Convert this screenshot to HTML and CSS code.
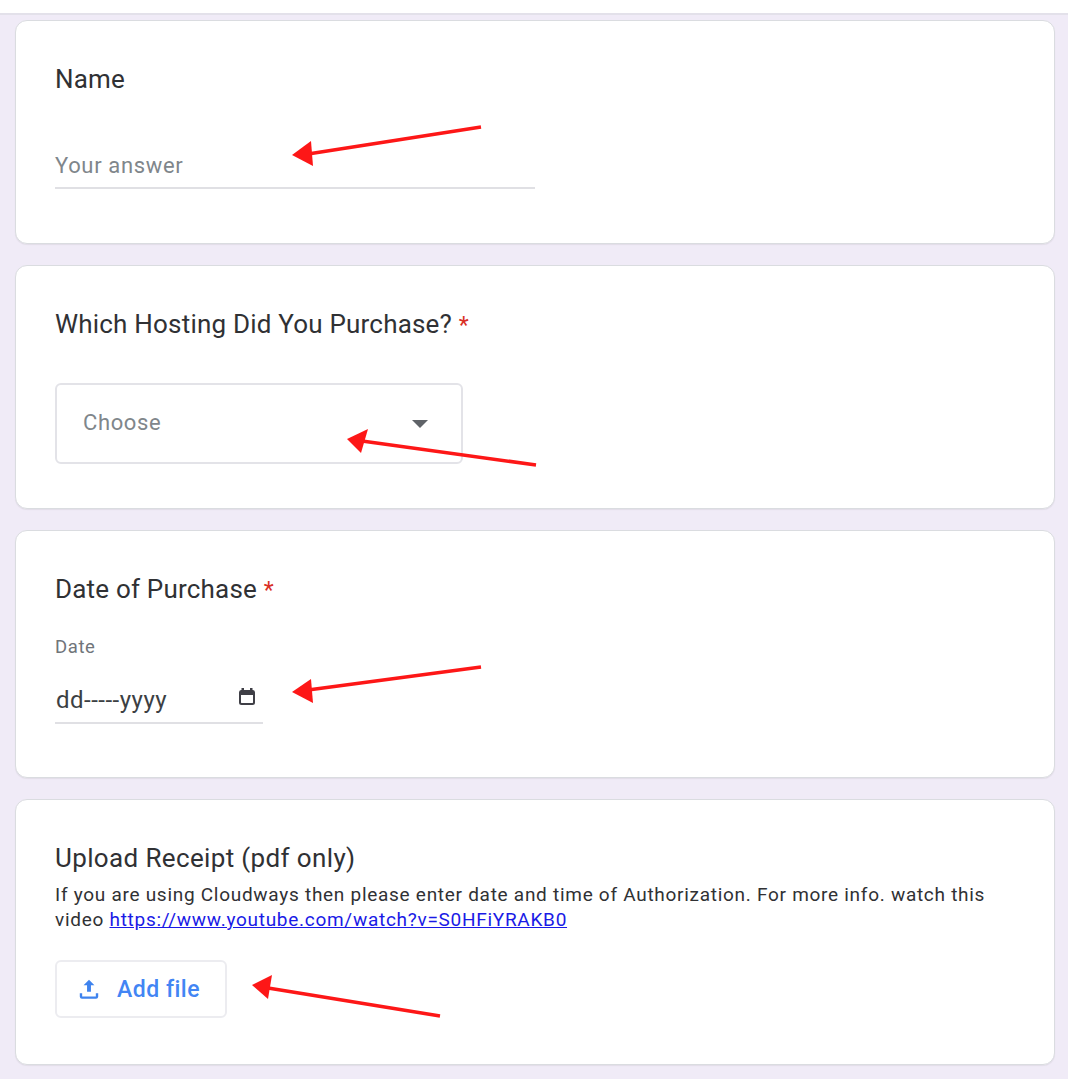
FILE: index.html
```html
<!DOCTYPE html>
<html lang="en">
<head>
<meta charset="utf-8">
<title>Form</title>
<link rel="stylesheet" href="styles.css">
</head>
<body>
<div class="topbar"></div>
<main class="form">
  <section class="card card-name">
    <h2 class="q">Name</h2>
    <div class="answer">Your answer</div>
  </section>
  <section class="card card-host">
    <h2 class="q">Which Hosting Did You Purchase? <span class="req">*</span></h2>
    <div class="select">
      <span class="select-text">Choose</span>
      <span class="caret"></span>
    </div>
  </section>
  <section class="card card-date">
    <h2 class="q">Date of Purchase <span class="req">*</span></h2>
    <div class="date-label">Date</div>
    <div class="date-input">
      <span class="date-text">dd-----yyyy</span>
      <svg class="cal" width="18" height="20" viewBox="0 0 18 20"><path fill="#3f3f46" d="M3.500 1h2.500v2h6V1h2.500v2h.5A2.500 2.500 0 0 1 17 5.500v10a2.500 2.500 0 0 1-2.500 2.500h-11A2.500 2.500 0 0 1 1 15.500v-10A2.500 2.500 0 0 1 3 3h.5V1zM3 8v7.500c0 .3.200.5.500.5h11c.3 0 .5-.2.5-.5V8H3z"/></svg>
    </div>
  </section>
  <section class="card card-upload">
    <h2 class="q">Upload Receipt (pdf only)</h2>
    <p class="help">If you are using Cloudways then please enter date and time of Authorization. For more info. watch this<br>video <a href="#">https://www.youtube.com/watch?v=S0HFiYRAKB0</a></p>
    <div class="add-file">
      <svg width="26" height="26" viewBox="0 0 24 24"><path fill="#3f83ee" d="M12 3.500l5 5h-3.200v6h-3.600v-6H7l5-5zM3.500 16h2.200v3h12.600v-3h2.200v3.200A2 2 0 0 1 18.500 21h-13a2 2 0 0 1-2-1.800V16z"/></svg>
      <span class="add-text">Add file</span>
    </div>
  </section>
</main>
<svg class="arrows" width="1068" height="1079" viewBox="0 0 1068 1079">
  <g fill="#fd1717" stroke="#fd1717">
    <path fill="none" stroke-width="3.500" d="M481 127L308 154"/>
    <path stroke="none" d="M292 155L311 141L313 166z"/>
    <path fill="none" stroke-width="3.500" d="M536 465L362 441"/>
    <path stroke="none" d="M347 439L368 429L361 453z"/>
    <path fill="none" stroke-width="3.500" d="M481 667L308 690"/>
    <path stroke="none" d="M292 692L311 679L313 703z"/>
    <path fill="none" stroke-width="3.500" d="M440 1016L268 988"/>
    <path stroke="none" d="M252 985L272 975L268 999z"/>
  </g>
</svg>
</body>
</html>
```
FILE: styles.css
```css
* { box-sizing: border-box; }
html, body { margin: 0; padding: 0; }
body {
  width: 1068px;
  height: 1079px;
  overflow: hidden;
  position: relative;
  background: #f0ebf7;
  font-family: Roboto, "Liberation Sans", sans-serif;
  color: #202124;
}
.topbar {
  height: 15px;
  background: #fff;
  border-bottom: 2px solid #e3e1ea;
}
.form {
  display: flex;
  flex-direction: column;
  gap: 21px;
  padding: 5px 13px 0 15px;
}
.card {
  background: #fff;
  border: 1px solid #dadce0;
  border-radius: 12px;
  padding: 43px 39px 0;
  box-shadow: 0 1px 1px rgba(60, 64, 67, .08);
}
.card-name { height: 224px; }
.card-host { height: 244px; }
.card-date { height: 248px; }
.card-upload { height: 266px; }
.q {
  margin: 0;
  font-size: 26px;
  line-height: 30px;
  letter-spacing: .2px;
  font-weight: 400;
  color: #303134;
}
.card-upload .q { letter-spacing: .36px; }
.req { font-size: 23px; line-height: 0; color: #d93025; }
.answer {
  width: 480px;
  height: 42px;
  margin-top: 53px;
  border-bottom: 2px solid #e0e0e4;
  font-size: 22px;
  line-height: 38px;
  letter-spacing: .65px;
  color: #80868b;
}
.select {
  width: 408px;
  height: 81px;
  margin-top: 44px;
  display: flex;
  align-items: center;
  justify-content: space-between;
  padding: 0 33px 0 26px;
  border: 2px solid #e3e3e8;
  border-radius: 6px;
}
.select-text {
  margin-bottom: 2px;
  font-size: 22px;
  letter-spacing: .6px;
  color: #80868b;
}
.caret {
  width: 0;
  height: 0;
  border-left: 8px solid transparent;
  border-right: 8px solid transparent;
  border-top: 8px solid #5f6368;
}
.date-label {
  margin-top: 31px;
  font-size: 18.5px;
  line-height: 24px;
  letter-spacing: .6px;
  color: #70757a;
}
.date-input {
  width: 208px;
  height: 48px;
  margin-top: 17px;
  display: flex;
  align-items: center;
  justify-content: space-between;
  padding: 0 7px 0 1px;
  border-bottom: 2px solid #e0e0e4;
}
.date-text {
  margin-top: 2px;
  font-size: 24px;
  letter-spacing: .5px;
  color: #3c4043;
}
.cal { display: block; margin-top: -4px; }
.help {
  margin: 9px 0 0;
  font-size: 19px;
  line-height: 25px;
  letter-spacing: .72px;
  color: #303134;
}
.help a { color: #1a1ae6; }
.add-file {
  width: 172px;
  height: 58px;
  margin-top: 28px;
  display: flex;
  align-items: center;
  gap: 15px;
  padding-left: 19px;
  border: 2px solid #ececf0;
  border-radius: 6px;
}
.add-file svg { display: block; }
.add-text {
  font-size: 23px;
  font-weight: 500;
  letter-spacing: .5px;
  color: #4285f4;
}
.arrows {
  position: absolute;
  left: 0;
  top: 0;
  pointer-events: none;
}
```
